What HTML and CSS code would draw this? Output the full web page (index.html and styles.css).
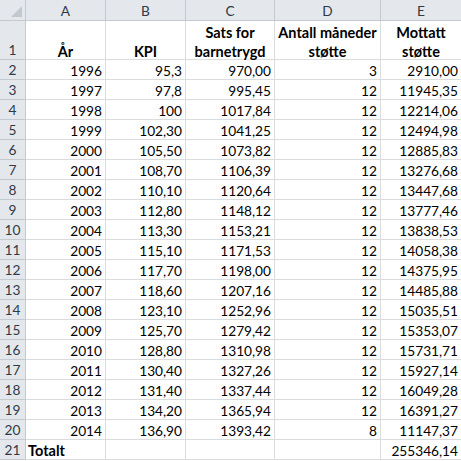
FILE: index.html
```html
<!DOCTYPE html>
<html lang="no">
<head>
<meta charset="utf-8">
<title>Barnetrygd</title>
<link rel="stylesheet" href="styles.css">
</head>
<body>
<div class="sheet">
  <div class="hd corner"><span class="tri"></span></div>
  <div class="hd col">A</div>
  <div class="hd col">B</div>
  <div class="hd col">C</div>
  <div class="hd col">D</div>
  <div class="hd col">E</div>

  <div class="hd rn">1</div>
  <div class="c th"><span>År</span></div>
  <div class="c th"><span>KPI</span></div>
  <div class="c th"><span>Sats for<br>barnetrygd</span></div>
  <div class="c th"><span>Antall måneder<br>støtte</span></div>
  <div class="c th"><span>Mottatt<br>støtte</span></div>

  <div class="hd rn">2</div><div class="c n">1996</div><div class="c n">95,3</div><div class="c n">970,00</div><div class="c n">3</div><div class="c n">2910,00</div>
  <div class="hd rn">3</div><div class="c n">1997</div><div class="c n">97,8</div><div class="c n">995,45</div><div class="c n">12</div><div class="c n">11945,35</div>
  <div class="hd rn">4</div><div class="c n">1998</div><div class="c n">100</div><div class="c n">1017,84</div><div class="c n">12</div><div class="c n">12214,06</div>
  <div class="hd rn">5</div><div class="c n">1999</div><div class="c n">102,30</div><div class="c n">1041,25</div><div class="c n">12</div><div class="c n">12494,98</div>
  <div class="hd rn">6</div><div class="c n">2000</div><div class="c n">105,50</div><div class="c n">1073,82</div><div class="c n">12</div><div class="c n">12885,83</div>
  <div class="hd rn">7</div><div class="c n">2001</div><div class="c n">108,70</div><div class="c n">1106,39</div><div class="c n">12</div><div class="c n">13276,68</div>
  <div class="hd rn">8</div><div class="c n">2002</div><div class="c n">110,10</div><div class="c n">1120,64</div><div class="c n">12</div><div class="c n">13447,68</div>
  <div class="hd rn">9</div><div class="c n">2003</div><div class="c n">112,80</div><div class="c n">1148,12</div><div class="c n">12</div><div class="c n">13777,46</div>
  <div class="hd rn">10</div><div class="c n">2004</div><div class="c n">113,30</div><div class="c n">1153,21</div><div class="c n">12</div><div class="c n">13838,53</div>
  <div class="hd rn">11</div><div class="c n">2005</div><div class="c n">115,10</div><div class="c n">1171,53</div><div class="c n">12</div><div class="c n">14058,38</div>
  <div class="hd rn">12</div><div class="c n">2006</div><div class="c n">117,70</div><div class="c n">1198,00</div><div class="c n">12</div><div class="c n">14375,95</div>
  <div class="hd rn">13</div><div class="c n">2007</div><div class="c n">118,60</div><div class="c n">1207,16</div><div class="c n">12</div><div class="c n">14485,88</div>
  <div class="hd rn">14</div><div class="c n">2008</div><div class="c n">123,10</div><div class="c n">1252,96</div><div class="c n">12</div><div class="c n">15035,51</div>
  <div class="hd rn">15</div><div class="c n">2009</div><div class="c n">125,70</div><div class="c n">1279,42</div><div class="c n">12</div><div class="c n">15353,07</div>
  <div class="hd rn">16</div><div class="c n">2010</div><div class="c n">128,80</div><div class="c n">1310,98</div><div class="c n">12</div><div class="c n">15731,71</div>
  <div class="hd rn">17</div><div class="c n">2011</div><div class="c n">130,40</div><div class="c n">1327,26</div><div class="c n">12</div><div class="c n">15927,14</div>
  <div class="hd rn">18</div><div class="c n">2012</div><div class="c n">131,40</div><div class="c n">1337,44</div><div class="c n">12</div><div class="c n">16049,28</div>
  <div class="hd rn">19</div><div class="c n">2013</div><div class="c n">134,20</div><div class="c n">1365,94</div><div class="c n">12</div><div class="c n">16391,27</div>
  <div class="hd rn">20</div><div class="c n">2014</div><div class="c n">136,90</div><div class="c n">1393,42</div><div class="c n">8</div><div class="c n">11147,37</div>
  <div class="hd rn">21</div><div class="c b">Totalt</div><div class="c"></div><div class="c"></div><div class="c"></div><div class="c n">255346,14</div>
</div>
</body>
</html>
```

FILE: styles.css
```css
* { box-sizing: border-box; }
html, body { margin: 0; padding: 0; background: #ffffff; }
body {
  font-family: Lato, "Open Sans", "Liberation Sans", sans-serif;
  font-size: 13.7px;
  color: #000;
}
.sheet {
  display: grid;
  grid-template-columns: 26px 80px 80px 89px 106px 81px;
  grid-template-rows: 21px 39px repeat(20, 20px);
  width: 462px;
}
.hd {
  background: #e4e8ed;
  border-right: 1px solid #c5cad1;
  border-bottom: 1px solid #c5cad1;
  color: #2f3a46;
  display: flex;
  justify-content: center;
  align-items: center;
  line-height: 19px;
}
.corner { position: relative; }
.tri {
  position: absolute;
  right: 3px;
  bottom: 3px;
  width: 0;
  height: 0;
  border-left: 11px solid transparent;
  border-bottom: 11px solid #c3c8cf;
}
.col { padding-top: 1px; }
.rn { align-items: flex-end; padding-top: 1px; }
.c {
  border-right: 1px solid #dadcdd;
  border-bottom: 1px solid #dadcdd;
  line-height: 19px;
  padding: 1px 3px 0;
  white-space: nowrap;
  overflow: hidden;
}
.n { text-align: right; }
.b { font-weight: bold; font-size: 14.5px; padding-left: 2px; }
.th {
  font-weight: bold;
  font-size: 14.5px;
  text-align: center;
  display: flex;
  align-items: flex-end;
  justify-content: center;
  padding: 0 1px;
  overflow: visible;
}
.th span { margin-bottom: -2px; }
```
